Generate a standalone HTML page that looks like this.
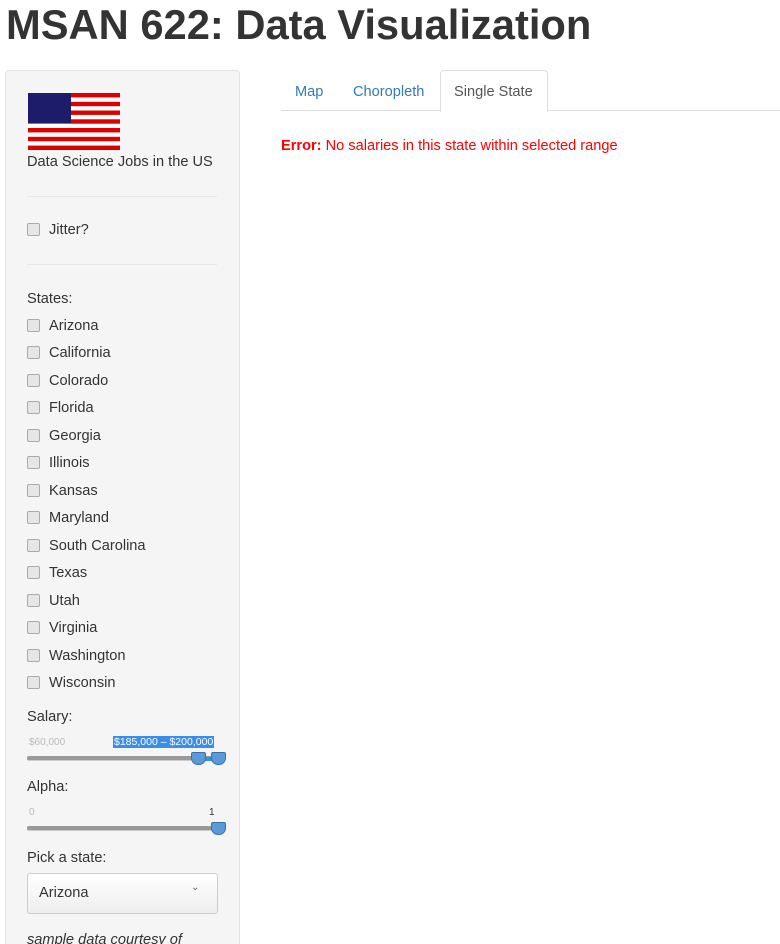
<!DOCTYPE html>
<html><head><meta charset="utf-8"><style>
html,body{margin:0;width:780px;height:944px;overflow:hidden}
body{background:#fff;font-family:"Liberation Sans",sans-serif;font-size:14.6px;color:#333;position:relative}
.a{position:absolute;white-space:nowrap}
.t{transform:translateY(1px)}
h1{position:absolute;left:6px;top:0;margin:0;font-size:41.7px;line-height:50px;font-weight:bold;color:#333}
.well{position:absolute;left:5px;top:70px;width:233px;height:900px;background:#f5f5f5;border:1px solid #e3e3e3;border-radius:4px}
.cb{position:absolute;left:27px;width:11px;height:11px;border:1px solid #aaa;background:#e6e6e6;border-radius:2px}
.hr{position:absolute;left:27px;width:190px;height:1px;background:#e8e8e8}
.track{position:absolute;left:27px;width:192px;height:4px;background:#999;border-radius:2px;border-bottom:1px solid #ccc}
.h{position:absolute;width:13px;height:11px;background:#5a9ad8;border:1px solid #3a70a8;border-radius:2px 2px 7px 7px}
</style></head><body>
<h1>MSAN 622: Data Visualization</h1>
<div class="well"></div>
<svg class="a" style="left:28px;top:93px" width="92" height="57">
<rect width="92" height="57" fill="#fff"/>
<g fill="#d00">
<rect y="0" width="92" height="4.4"/><rect y="8.8" width="92" height="4.4"/><rect y="17.5" width="92" height="4.4"/><rect y="26.3" width="92" height="4.4"/><rect y="35" width="92" height="4.4"/><rect y="43.8" width="92" height="4.4"/><rect y="52.6" width="92" height="4.4"/></g>
<rect width="43" height="30" fill="#1c1c6a"/>
</svg>
<div class="a t" style="left:27px;top:153px">Data Science Jobs in the US</div>
<div class="hr" style="top:196px"></div>
<div class="cb" style="top:223px"></div><div class="a t" style="left:49px;top:221px">Jitter?</div>
<div class="hr" style="top:264px"></div>
<div class="a t" style="left:27px;top:290px">States:</div>
<div class="cb" style="top:319px"></div><div class="a t" style="left:49px;top:317px">Arizona</div>
<div class="cb" style="top:346px"></div><div class="a t" style="left:49px;top:344px">California</div>
<div class="cb" style="top:374px"></div><div class="a t" style="left:49px;top:372px">Colorado</div>
<div class="cb" style="top:401px"></div><div class="a t" style="left:49px;top:399px">Florida</div>
<div class="cb" style="top:429px"></div><div class="a t" style="left:49px;top:427px">Georgia</div>
<div class="cb" style="top:456px"></div><div class="a t" style="left:49px;top:454px">Illinois</div>
<div class="cb" style="top:484px"></div><div class="a t" style="left:49px;top:482px">Kansas</div>
<div class="cb" style="top:511px"></div><div class="a t" style="left:49px;top:509px">Maryland</div>
<div class="cb" style="top:539px"></div><div class="a t" style="left:49px;top:537px">South Carolina</div>
<div class="cb" style="top:566px"></div><div class="a t" style="left:49px;top:564px">Texas</div>
<div class="cb" style="top:594px"></div><div class="a t" style="left:49px;top:592px">Utah</div>
<div class="cb" style="top:621px"></div><div class="a t" style="left:49px;top:619px">Virginia</div>
<div class="cb" style="top:649px"></div><div class="a t" style="left:49px;top:647px">Washington</div>
<div class="cb" style="top:676px"></div><div class="a t" style="left:49px;top:674px">Wisconsin</div>
<div class="a t" style="left:27px;top:708px">Salary:</div>
<div class="a" style="left:29px;top:737px;font-size:10px;color:#bbb">$60,000</div>
<div class="a" style="left:113px;top:736px;font-size:10.5px;color:#fff;background:#3a8ee6;padding:0 1px">$185,000 – $200,000</div>
<div class="track" style="top:756px"></div>
<div class="a" style="left:198px;top:757px;width:20px;height:4px;background:#3a8ee6"></div>
<div class="h" style="left:191px;top:752px"></div><div class="h" style="left:211px;top:752px"></div>
<div class="a t" style="left:27px;top:778px">Alpha:</div>
<div class="a" style="left:29px;top:807px;font-size:10px;color:#bbb">0</div>
<div class="a" style="left:209px;top:807px;font-size:10px;color:#333">1</div>
<div class="track" style="top:826px"></div>
<div class="h" style="left:211px;top:822px"></div>
<div class="a t" style="left:27px;top:849px">Pick a state:</div>
<div class="a" style="left:27px;top:873px;width:189px;height:39px;border:1px solid #ccc;border-radius:3px;background:linear-gradient(#fff,#eee)"></div>
<div class="a t" style="left:39px;top:884px">Arizona</div>
<div class="a" style="left:191px;top:882px;font-size:10px;color:#666">&#8964;</div>
<div class="a t" style="left:27px;top:931px;font-style:italic">sample data courtesy of</div>
<div class="a" style="left:281px;top:110px;width:499px;height:1px;background:#ddd"></div>
<div class="a" style="left:440px;top:70px;width:106px;height:41px;border:1px solid #ddd;border-bottom:none;border-radius:4px 4px 0 0;background:#fff"></div>
<div class="a t" style="left:295px;top:83px;color:#337ab7">Map</div>
<div class="a t" style="left:353px;top:83px;color:#337ab7">Choropleth</div>
<div class="a t" style="left:454px;top:83px;color:#555">Single State</div>
<div class="a t" style="left:281px;top:137px;color:#f00"><b>Error:</b> No salaries in this state within selected range</div>
</body></html>
